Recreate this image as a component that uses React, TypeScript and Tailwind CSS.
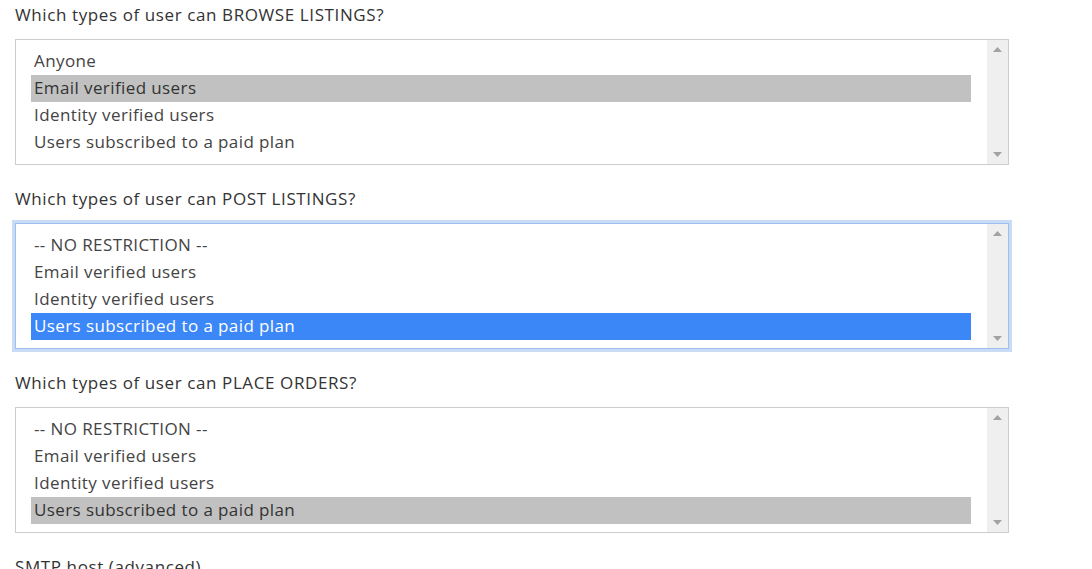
import React from 'react';

type Option = { label: string; state?: 'gray' | 'blue' };

const sections: { title: string; focused?: boolean; options: Option[] }[] = [
  {
    title: 'Which types of user can BROWSE LISTINGS?',
    options: [
      { label: 'Anyone' },
      { label: 'Email verified users', state: 'gray' },
      { label: 'Identity verified users' },
      { label: 'Users subscribed to a paid plan' },
    ],
  },
  {
    title: 'Which types of user can POST LISTINGS?',
    focused: true,
    options: [
      { label: '-- NO RESTRICTION --' },
      { label: 'Email verified users' },
      { label: 'Identity verified users' },
      { label: 'Users subscribed to a paid plan', state: 'blue' },
    ],
  },
  {
    title: 'Which types of user can PLACE ORDERS?',
    options: [
      { label: '-- NO RESTRICTION --' },
      { label: 'Email verified users' },
      { label: 'Identity verified users' },
      { label: 'Users subscribed to a paid plan', state: 'gray' },
    ],
  },
];

function MultiSelect({ options, focused }: { options: Option[]; focused?: boolean }) {
  return (
    <div
      className={`flex h-[126px] w-[994px] border bg-white ${
        focused ? 'border-[#9fc0ee] shadow-[0_0_0_3px_#c9dbf5]' : 'border-[#cccccc]'
      }`}
    >
      <div className="flex flex-1 flex-col pl-[15px] pr-[16px] pt-[8px]">
        {options.map((o) => (
          <div
            key={o.label}
            className={`h-[27px] pl-[3px] text-[17px] leading-[25px] tracking-[0.4px] ${
              o.state === 'blue'
                ? 'bg-[#3b87f7] text-white'
                : o.state === 'gray'
                ? 'bg-[#c1c1c1] text-[#333333]'
                : 'text-[#444444]'
            }`}
          >
            {o.label}
          </div>
        ))}
      </div>
      <div className="flex w-[21px] flex-col items-center justify-between bg-[#efefef] py-[7px]">
        <svg width="9" height="5" viewBox="0 0 9 5">
          <path d="M0 5 L4.5 0 L9 5 Z" fill="#a3a3a3" />
        </svg>
        <svg width="9" height="5" viewBox="0 0 9 5">
          <path d="M0 0 L4.5 5 L9 0 Z" fill="#a3a3a3" />
        </svg>
      </div>
    </div>
  );
}

export default function App() {
  return (
    <div
      className="h-[569px] w-[1092px] overflow-hidden bg-white pl-[15px] pt-[3px] text-[#333333]"
      style={{ fontFamily: '"Open Sans", "Lato", sans-serif' }}
    >
      {sections.map((s) => (
        <div key={s.title} className="mb-[22px]">
          <div className="mb-[12px] text-[17px] leading-[24px] tracking-[0.6px]">{s.title}</div>
          <MultiSelect options={s.options} focused={s.focused} />
        </div>
      ))}
      <div className="text-[17px] leading-[24px] tracking-[0.6px]">SMTP host (advanced)</div>
    </div>
  );
}
